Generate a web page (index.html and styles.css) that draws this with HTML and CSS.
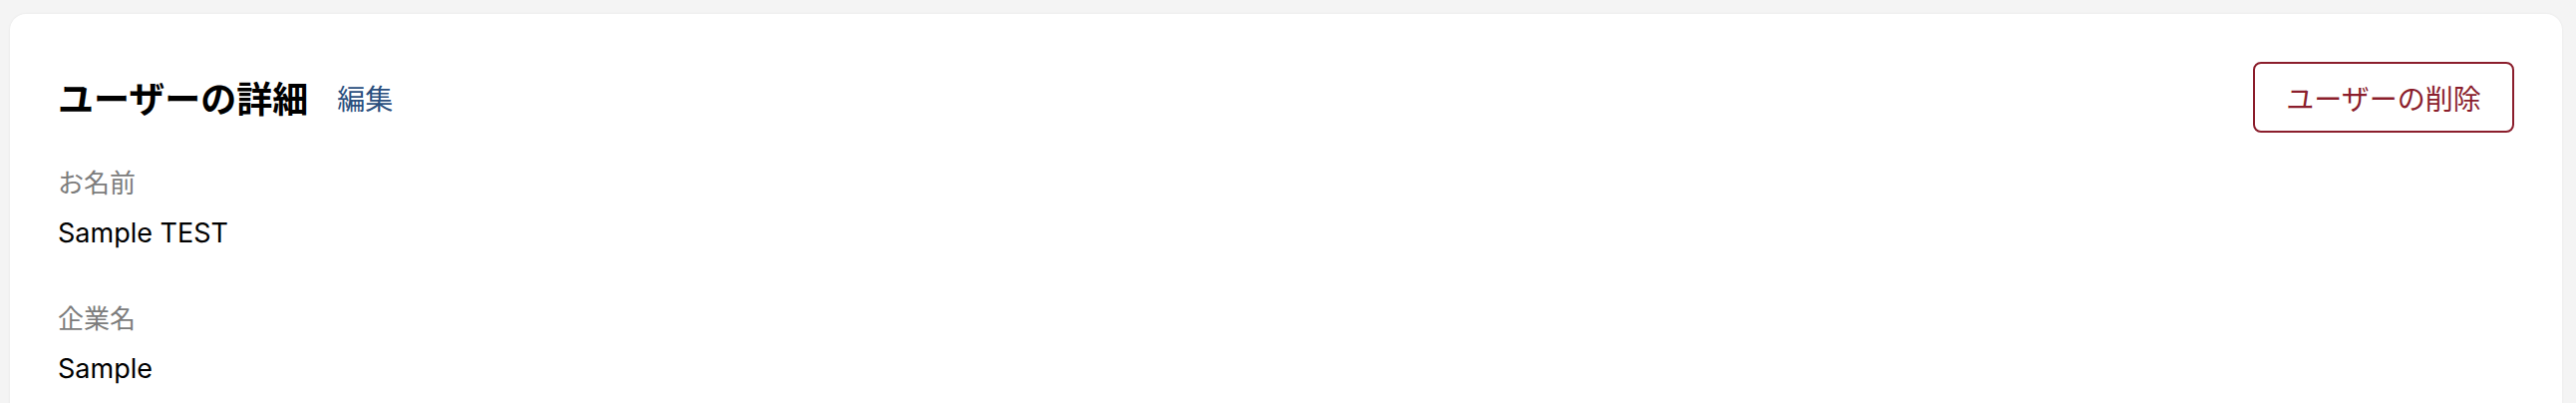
FILE: index.html
```html
<!DOCTYPE html>
<html lang="ja">
<head>
    <meta charset="UTF-8">
    <meta name="viewport" content="width=device-width, initial-scale=1.0">
    <title>ユーザーの詳細</title>
    <link rel="stylesheet" href="styles.css">
</head>
<body>
    <section class="card">
        <div class="card-header">
            <div class="title-group">
                <h1 class="card-title">ユーザーの詳細</h1>
                <a class="edit-link" href="#">編集</a>
            </div>
            <button class="btn-delete" type="button">ユーザーの削除</button>
        </div>

        <dl class="detail-list">
            <div class="detail-item">
                <dt>お名前</dt>
                <dd>Sample TEST</dd>
            </div>
            <div class="detail-item">
                <dt>企業名</dt>
                <dd>Sample</dd>
            </div>
        </dl>
    </section>
</body>
</html>
```

FILE: styles.css
```css
body {
    margin: 0;
    padding: 14px 14px 0 10px;
    background-color: #f4f4f4;
    font-family: Inter, "Noto Sans CJK JP", sans-serif;
    color: #111;
}
.card {
    background-color: #fff;
    border-radius: 16px 16px 0 0;
    box-shadow: 0 0 3px rgba(0, 0, 0, 0.06);
    padding: 48px 48px 40px 48px;
    min-height: 400px;
}
.card-header {
    display: flex;
    align-items: center;
    justify-content: space-between;
}
.title-group {
    display: flex;
    align-items: center;
    gap: 29px;
}
.card-title {
    margin: 0;
    font-family: "Noto Sans CJK JP", sans-serif;
    font-size: 36px;
    font-weight: 700;
    line-height: 1.2;
    color: #000;
}
.edit-link {
    font-family: "Noto Sans CJK JP", sans-serif;
    font-size: 28px;
    color: #2b4f7e;
    text-decoration: none;
}
.btn-delete {
    width: 262px;
    height: 71px;
    background-color: #fff;
    border: 2px solid #8b1e2c;
    border-radius: 8px;
    color: #8b1e2c;
    font-family: "Noto Sans CJK JP", sans-serif;
    font-size: 28px;
    cursor: pointer;
}
.detail-list {
    margin: 31px 0 0 0;
}
.detail-item {
    margin-bottom: 48px;
}
.detail-item dt {
    font-family: "Noto Sans CJK JP", sans-serif;
    font-size: 26px;
    line-height: 36px;
    color: #7c7c7c;
    margin-bottom: 16px;
}
.detail-item dd {
    margin: 0;
    font-size: 27px;
    line-height: 36px;
    color: #000;
}
```
